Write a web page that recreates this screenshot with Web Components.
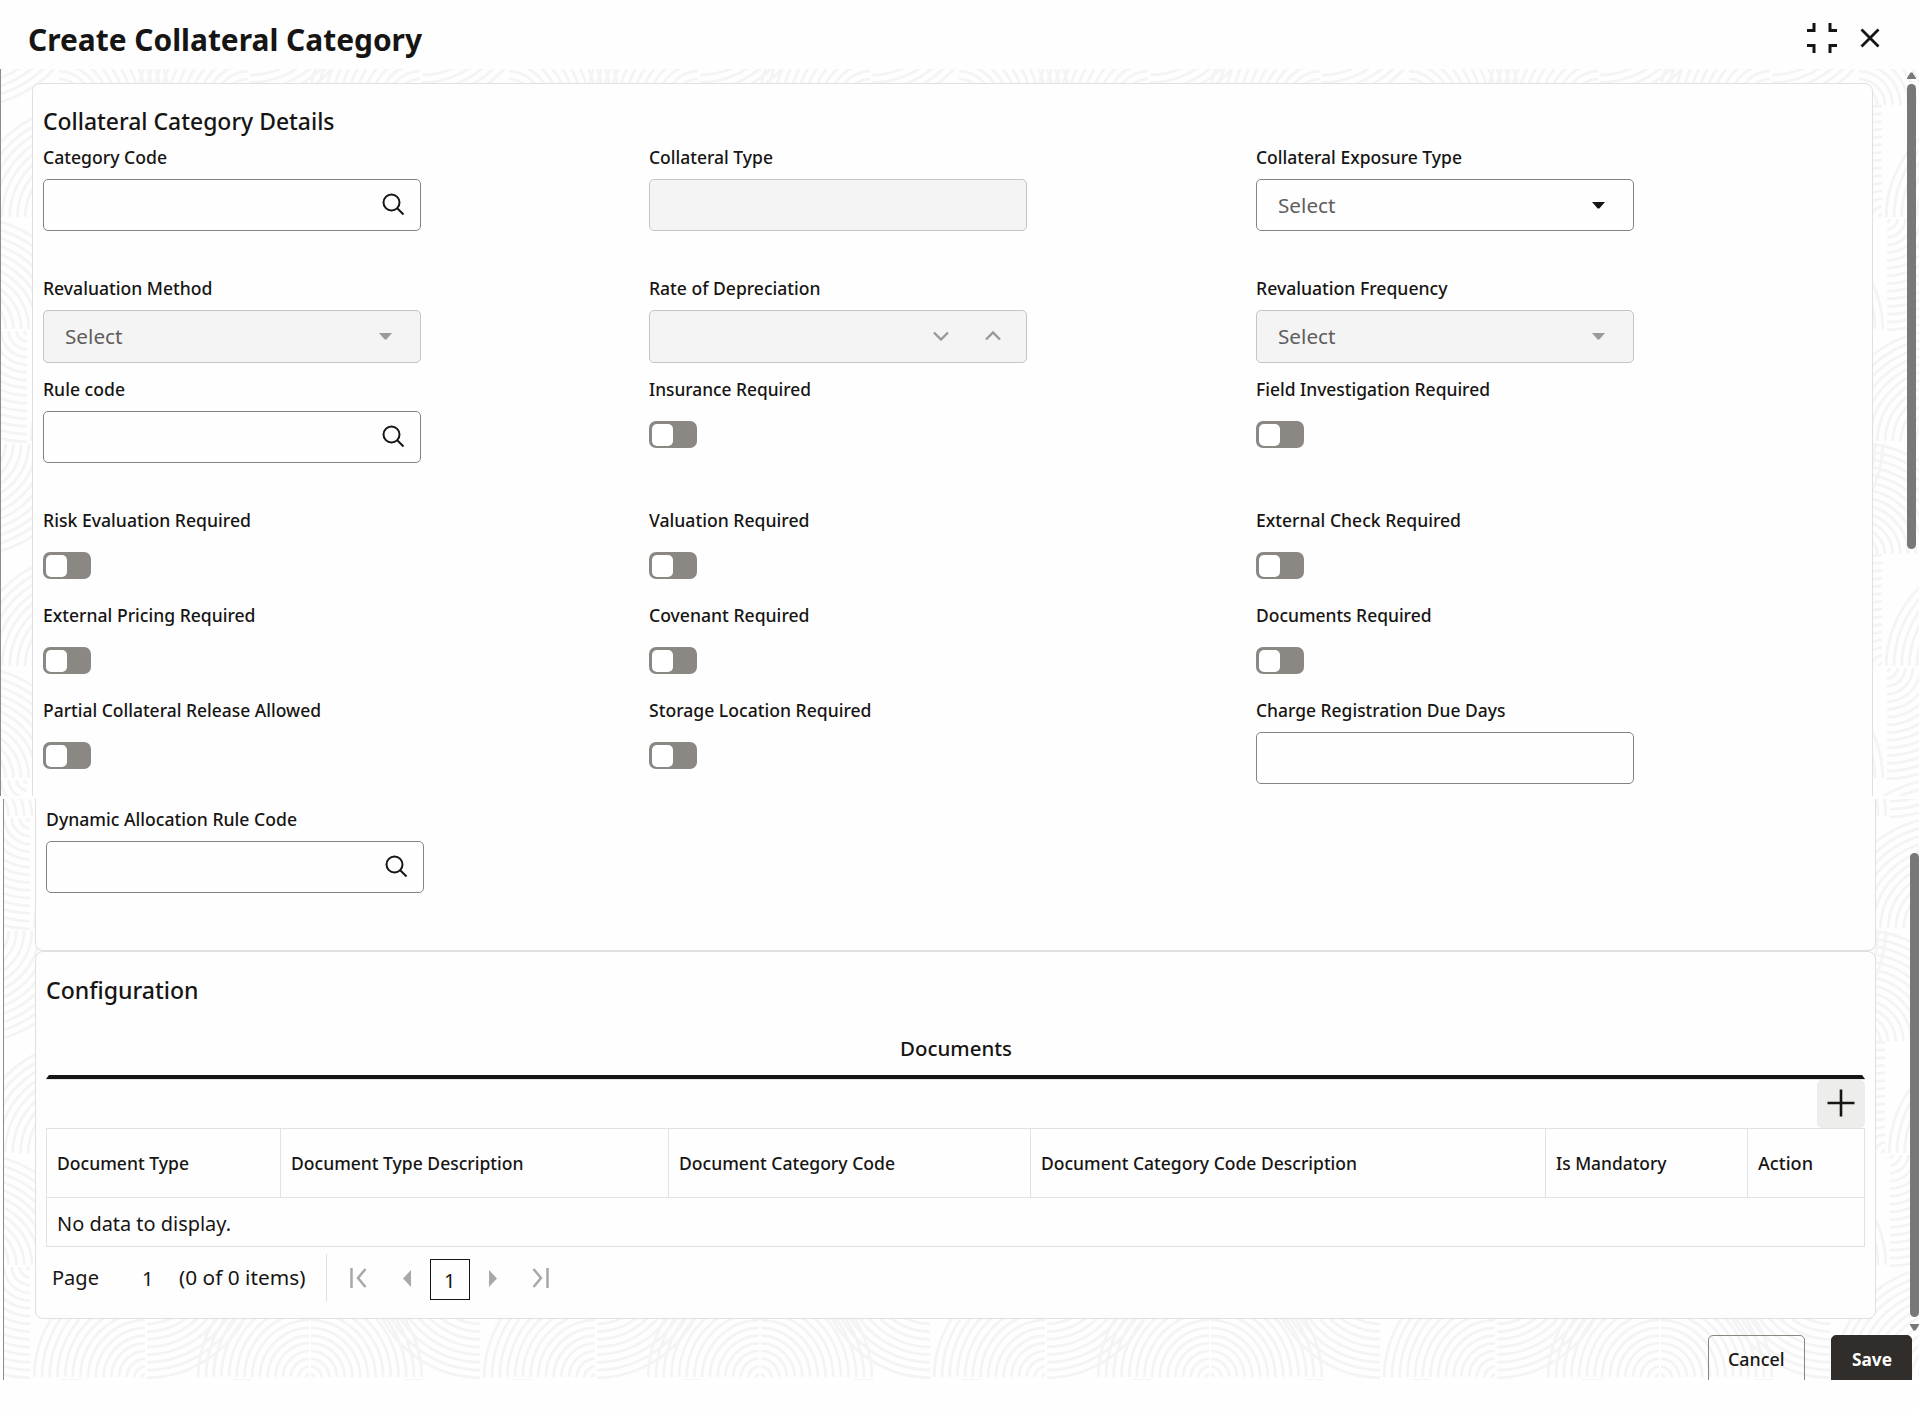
<!DOCTYPE html>
<html lang="en">
<head>
<meta charset="utf-8">
<title>Create Collateral Category</title>
<style>
  body {
    margin: 0;
    width: 1919px;
    height: 1410px;
    overflow: hidden;
    background: #fefefe;
    color: #161513;
    font-family: "Noto Sans", "Open Sans", sans-serif;
  }
</style>
</head>
<body>
<collateral-page></collateral-page>

<script>
// Text that is condensed to the given width
class FitText extends HTMLElement {
  constructor() {
    super();
    this.attachShadow({ mode: "open" });
    this.shadowRoot.innerHTML = `
      <style>
        :host { display: block; white-space: nowrap; }
        span { display: inline-block; transform-origin: 0 50%; }
      </style>
      <span><slot></slot></span>
    `;
  }

  connectedCallback() {
    const span = this.shadowRoot.querySelector("span");
    const width = Number(this.getAttribute("w")) + 1;
    this.style.width = width + "px";
    span.style.transform = `scaleX(${width / span.getBoundingClientRect().width})`;
  }
}

class WaveBackdrop extends HTMLElement {
  constructor() {
    super();
    this.attachShadow({ mode: "open" });
  }

  connectedCallback() {
    const x = this.getAttribute("x") || 0;
    const y = this.getAttribute("y") || 0;
    // centre x, centre y, horizontal side, vertical side
    const fans = [
      [57, 112, 1, -1], [248, 112, -1, -1], [248, 0, 1, 1], [420, 112, -1, -1], [-30, 0, 1, 1],
      [82, 224, -1, -1], [197, 224, -1, -1], [307, 224, 1, -1],
      [-30, 336, 1, -1], [85, 224, 1, 1], [310, 336, -1, -1],
      [27, 336, -1, 1], [142, 448, -1, -1], [142, 336, 1, 1], [306, 448, -1, -1], [306, 448, 1, -1]
    ];
    let d = "";
    for (const [cx, cy, h, v] of fans) {
      // a quarter turn from the horizontal radius to the vertical one
      const sweep = h * v > 0 ? 1 : 0;
      for (const shift of [0, 450]) {
        for (let r = 4; r < 113; r += 7.7) {
          d += `M${cx + shift + h * r} ${cy + v}A${r} ${r} 0 0 ${sweep} ${cx + shift + h} ${cy + v * r}`;
        }
      }
    }
    this.shadowRoot.innerHTML = `
      <style>
        :host { position: absolute; inset: 0; z-index: -1; }
        svg { display: block; width: 100%; height: 100%; }
      </style>
      <svg>
        <pattern id="waves" patternUnits="userSpaceOnUse" x="${x}" y="${y}" width="450" height="449">
          <path d="${d}" fill="none" stroke="#f4f4f4" stroke-width="2.800"/>
        </pattern>
        <rect width="100%" height="100%" fill="url(#waves)"/>
      </svg>
    `;
  }
}

class ScrollPane extends HTMLElement {
  constructor() {
    super();
    this.attachShadow({ mode: "open" });
    this.shadowRoot.innerHTML = `
      <style>
        :host {
          display: block;
          position: relative;
          z-index: 0;
          overflow: hidden;
          box-sizing: border-box;
          border-left: 1px solid #8c8c8c;
        }
      </style>
      <slot></slot>
    `;
  }
}

class ScrollThumb extends HTMLElement {
  constructor() {
    super();
    this.attachShadow({ mode: "open" });
    const down = this.hasAttribute("down");
    this.shadowRoot.innerHTML = `
      <style>
        :host {
          position: absolute;
          display: flex;
          flex-direction: ${down ? "column-reverse" : "column"};
          gap: ${down ? 7 : 5}px;
          width: 9px;
        }
        svg { display: block; flex: none; }
        div { flex: 1; border-radius: 5px; background: #787878; }
      </style>
      <svg width="9" height="7" fill="#787878"><path d="${down ? "M0 0h9v1L5.5 6.5h-2L0 1z" : "M3.500 .5h2L9 6v1H0V6z"}"/></svg>
      <div></div>
    `;
  }
}

class PanelCard extends HTMLElement {
  constructor() {
    super();
    this.attachShadow({ mode: "open" });
    this.shadowRoot.innerHTML = `
      <style>
        :host {
          display: block;
          box-sizing: border-box;
          width: 1841px;
          border: 1px solid #e0e0e0;
          border-radius: 8px;
          background: #fefefe;
        }
      </style>
      <slot></slot>
    `;
  }
}

const icons = {
  search: `<svg width="24" height="24" fill="none" stroke="#161513" stroke-width="2"><circle cx="10.500" cy="10.500" r="8"/><path d="M16 16l6.500 6.500"/></svg>`,
  drop: `<svg width="13" height="7" fill="currentColor"><path d="M0 0h13L7.300 6.500H5.700z"/></svg>`,
  spin: `<svg width="68" height="10" fill="none" stroke="#999" stroke-width="2.400"><path d="M1 1.500l7 7 7-7M53 8.500l7-7 7 7"/></svg>`
};

class FormField extends HTMLElement {
  constructor() {
    super();
    this.attachShadow({ mode: "open" });
  }

  connectedCallback() {
    const kind = this.getAttribute("kind");
    const content = {
      search: icons.search,
      text: "",
      select: `<fit-text class="value" w="56.5">Select</fit-text>${icons.drop}`,
      spin: icons.spin
    };
    const control = kind === "switch"
      ? `<div class="switch"><i></i></div>`
      : `<div class="box ${kind}">${content[kind]}</div>`;
    this.shadowRoot.innerHTML = `
      <style>
        :host { display: block; width: 378px; }
        .label { height: 20px; line-height: 20px; font-size: 17.6px; font-weight: 500; }
        .box {
          box-sizing: border-box;
          height: 52px;
          margin-top: 12px;
          border: 1px solid #858381;
          border-radius: 5px;
          background: #fefefe;
          display: flex;
          align-items: center;
          justify-content: flex-end;
        }
        .search { padding: 0 15px 2px 0; }
        .select { justify-content: space-between; padding: 0 28px 0 20.5px; }
        .spin { padding: 0 25px 1px 0; }
        .value { font-size: 20.4px; line-height: 28px; color: #5f5e5d; }
        :host([disabled]) .box { height: 53px; background: #f4f4f4; border-color: #c6c5c4; }
        :host([disabled]) .text { height: 52px; }
        :host([disabled]) .select { padding-bottom: 1px; }
        :host([disabled]) .box > svg { color: #9a9a9a; }
        .switch {
          box-sizing: border-box;
          width: 48px;
          height: 27px;
          margin-top: 22px;
          padding: 2.500px 3px;
          border-radius: 7px;
          background: #8b8783;
        }
        i { display: block; width: 21px; height: 22px; border-radius: 5px; background: #fff; }
      </style>
      <fit-text class="label" w="${this.getAttribute("w")}">${this.getAttribute("label")}</fit-text>
      ${control}
    `;
  }
}

class DialogHeader extends HTMLElement {
  constructor() {
    super();
    this.attachShadow({ mode: "open" });
    this.shadowRoot.innerHTML = `
      <style>
        :host {
          box-sizing: border-box;
          display: flex;
          align-items: flex-start;
          justify-content: space-between;
          height: 69px;
          padding: 19px 39px 0 28px;
        }
        fit-text { font-size: 30.5px; line-height: 40px; font-weight: 700; }
        div { display: flex; align-items: center; gap: 23px; padding-top: 3px; }
        svg { display: block; fill: none; stroke: #161513; stroke-width: 3; }
      </style>
      <fit-text w="393"><slot></slot></fit-text>
      <div>
        <svg width="30" height="32"><path d="M0 8.500h7V1M30 8.500h-7V1M0 23.500h7V31M30 23.500h-7V31"/></svg>
        <svg width="20" height="20"><path d="M1.500 1.500l17 17M18.500 1.500l-17 17" stroke-width="2.800"/></svg>
      </div>
    `;
  }
}

class DocumentsTable extends HTMLElement {
  constructor() {
    super();
    this.attachShadow({ mode: "open" });
    const columns = [
      ["Document Type", 131, 234], ["Document Type Description", 231.5, 388],
      ["Document Category Code", 215, 362], ["Document Category Code Description", 315, 515],
      ["Is Mandatory", 109.5, 202], ["Action", 54, 118]
    ];
    this.shadowRoot.innerHTML = `
      <style>
        :host { display: block; border: 1px solid #e2e2e2; }
        .head {
          display: grid;
          grid-template-columns: ${columns.map((c) => c[2] + "px").join(" ")};
          height: 68px;
          border-bottom: 1px solid #e2e2e2;
          font-size: 17.6px;
          font-weight: 500;
          line-height: 69px;
        }
        .head div { box-sizing: border-box; padding-left: 10px; border-right: 1px solid #e2e2e2; }
        .head div:last-child { border: 0; }
        .empty { height: 48px; padding-left: 10px; font-size: 20.4px; line-height: 50px; }
      </style>
      <div class="head">${columns.map((c) => `<div><fit-text w="${c[1]}">${c[0]}</fit-text></div>`).join("")}</div>
      <div class="empty"><fit-text w="173">No data to display.</fit-text></div>
    `;
  }
}

class TablePager extends HTMLElement {
  constructor() {
    super();
    this.attachShadow({ mode: "open" });
    this.shadowRoot.innerHTML = `
      <style>
        :host {
          display: flex;
          align-items: center;
          height: 48px;
          margin-top: 7px;
          padding-left: 6px;
          font-size: 20.4px;
          line-height: 28px;
        }
        fit-text { margin-top: -3px; }
        .page { margin-left: 43px; margin-top: 0; }
        .count { margin-left: 25.5px; }
        hr { width: 1px; height: 48px; margin: 0 23px 0 20.5px; border: 0; background: #e2e2e2; }
        svg { display: block; fill: #a8a8a8; }
        .line { fill: none; stroke: #a8a8a8; stroke-width: 2.5; }
        .current {
          box-sizing: border-box;
          width: 40px;
          height: 41px;
          margin: 2px 19px 0 19px;
          border: 1.5px solid #161513;
          padding: 6px 0 0 13.5px;
        }
        .current fit-text { margin: 0; }
      </style>
      <fit-text w="46">Page</fit-text>
      <fit-text class="page" w="10.5">1</fit-text>
      <fit-text class="count" w="125.5">(0 of 0 items)</fit-text>
      <hr>
      <svg class="line" width="17" height="20"><path d="M1.500 0v20M15.500 1L8 10l7.500 9"/></svg>
      <svg width="9" height="17" style="margin-left:34.500px"><path d="M9 0v17L1 8.500z"/></svg>
      <div class="current"><fit-text w="10.5">1</fit-text></div>
      <svg width="9" height="17"><path d="M0 0v17l8-8.500z"/></svg>
      <svg class="line" width="17" height="20" style="margin-left:34.500px"><path d="M15.500 0v20M1.500 1L9 10l-7.500 9"/></svg>
    `;
  }
}

class ActionButton extends HTMLElement {
  constructor() {
    super();
    this.attachShadow({ mode: "open" });
    this.shadowRoot.innerHTML = `
      <style>
        :host {
          box-sizing: border-box;
          display: flex;
          justify-content: center;
          width: 97px;
          height: 54px;
          padding-top: 11px;
          border: 1px solid #8b8580;
          border-radius: 5px;
          font-size: 17.6px;
          font-weight: 500;
          line-height: 24px;
        }
        :host([primary]) { width: 81px; border-color: #312d2a; background: #312d2a; color: #fff; font-weight: 700; }
      </style>
      <slot></slot>
    `;
  }
}

class CollateralPage extends HTMLElement {
  constructor() {
    super();
    this.attachShadow({ mode: "open" });
    this.shadowRoot.innerHTML = `
      <style>
        :host { display: block; }
        .top { height: 727px; }
        .bottom { height: 581px; margin: 3px 0 0 3px; }
        .top .details { height: 760px; margin: 14px 0 0 31px; padding: 22px 10px 0; }
        .heading { height: 30px; font-size: 23.5px; line-height: 30px; font-weight: 480; }
        .fields {
          display: grid;
          grid-template-columns: 606px 607px 378px;
          grid-template-rows: 131px 101px 131px 95px 95px 84px;
          margin-top: 11px;
        }
        .bottom panel-card { margin-left: 31px; }
        .bottom .details { height: 152px; border-top: 0; border-radius: 0 0 8px 8px; padding: 10px 10px 0; }
        .config { height: 368px; padding: 23px 10px 0; }
        .tab { display: flex; justify-content: center; margin-top: 29px; font-size: 20.4px; line-height: 28px; font-weight: 500; }
        .bar { height: 4px; margin-top: 13px; background: #161513; clip-path: polygon(3px 0, 1816px 0, 100% 100%, 0 100%); }
        .tools { display: flex; justify-content: flex-end; height: 49px; border-top: 1px solid #e6e6e6; box-sizing: border-box; }
        .add { display: grid; place-items: center; width: 48px; height: 48px; border-radius: 5px; background: #ededeb; }
        .add svg { display: block; margin-top: -3px; }
        .footer { display: flex; justify-content: flex-end; gap: 26px; padding: 16px 7px 0 0; }
        .upper { top: 3px; right: 3px; height: 477px; }
        .lower { top: 54px; right: 0; height: 478px; }
      </style>
      <dialog-header>Create Collateral Category</dialog-header>
      <scroll-pane class="top">
        <wave-backdrop x="0" y="-75"></wave-backdrop>
        <panel-card class="details">
          <fit-text class="heading" w="290.5">Collateral Category Details</fit-text>
          <div class="fields">
            <form-field kind="search" label="Category Code" w="123"></form-field>
            <form-field kind="text" label="Collateral Type" w="123" disabled></form-field>
            <form-field kind="select" label="Collateral Exposure Type" w="205"></form-field>
            <form-field kind="select" label="Revaluation Method" w="168.5" disabled></form-field>
            <form-field kind="spin" label="Rate of Depreciation" w="170.5" disabled></form-field>
            <form-field kind="select" label="Revaluation Frequency" w="190.5" disabled></form-field>
            <form-field kind="search" label="Rule code" w="81"></form-field>
            <form-field kind="switch" label="Insurance Required" w="161"></form-field>
            <form-field kind="switch" label="Field Investigation Required" w="233"></form-field>
            <form-field kind="switch" label="Risk Evaluation Required" w="207"></form-field>
            <form-field kind="switch" label="Valuation Required" w="159.5"></form-field>
            <form-field kind="switch" label="External Check Required" w="204"></form-field>
            <form-field kind="switch" label="External Pricing Required" w="211.5"></form-field>
            <form-field kind="switch" label="Covenant Required" w="159.5"></form-field>
            <form-field kind="switch" label="Documents Required" w="174.5"></form-field>
            <form-field kind="switch" label="Partial Collateral Release Allowed" w="277"></form-field>
            <form-field kind="switch" label="Storage Location Required" w="221.5"></form-field>
            <form-field kind="text" label="Charge Registration Due Days" w="248.5"></form-field>
          </div>
        </panel-card>
        <scroll-thumb class="upper"></scroll-thumb>
      </scroll-pane>
      <scroll-pane class="bottom">
        <wave-backdrop x="0" y="131"></wave-backdrop>
        <panel-card class="details">
          <form-field kind="search" label="Dynamic Allocation Rule Code" w="250"></form-field>
        </panel-card>
        <panel-card class="config">
          <fit-text class="heading" w="151.5">Configuration</fit-text>
          <div class="tab"><fit-text w="111">Documents</fit-text></div>
          <div class="bar"></div>
          <div class="tools">
            <div class="add"><svg width="28" height="28" stroke="#161513" stroke-width="2.600"><path d="M14 .5v27M.5 14h27"/></svg></div>
          </div>
          <documents-table></documents-table>
          <table-pager></table-pager>
        </panel-card>
        <div class="footer">
          <action-button><fit-text w="55.5">Cancel</fit-text></action-button>
          <action-button primary><fit-text w="39">Save</fit-text></action-button>
        </div>
        <scroll-thumb class="lower" down></scroll-thumb>
      </scroll-pane>
    `;
  }
}

customElements.define("fit-text", FitText);
customElements.define("wave-backdrop", WaveBackdrop);
customElements.define("scroll-pane", ScrollPane);
customElements.define("scroll-thumb", ScrollThumb);
customElements.define("panel-card", PanelCard);
customElements.define("form-field", FormField);
customElements.define("dialog-header", DialogHeader);
customElements.define("documents-table", DocumentsTable);
customElements.define("table-pager", TablePager);
customElements.define("action-button", ActionButton);
customElements.define("collateral-page", CollateralPage);
</script>
</body>
</html>
